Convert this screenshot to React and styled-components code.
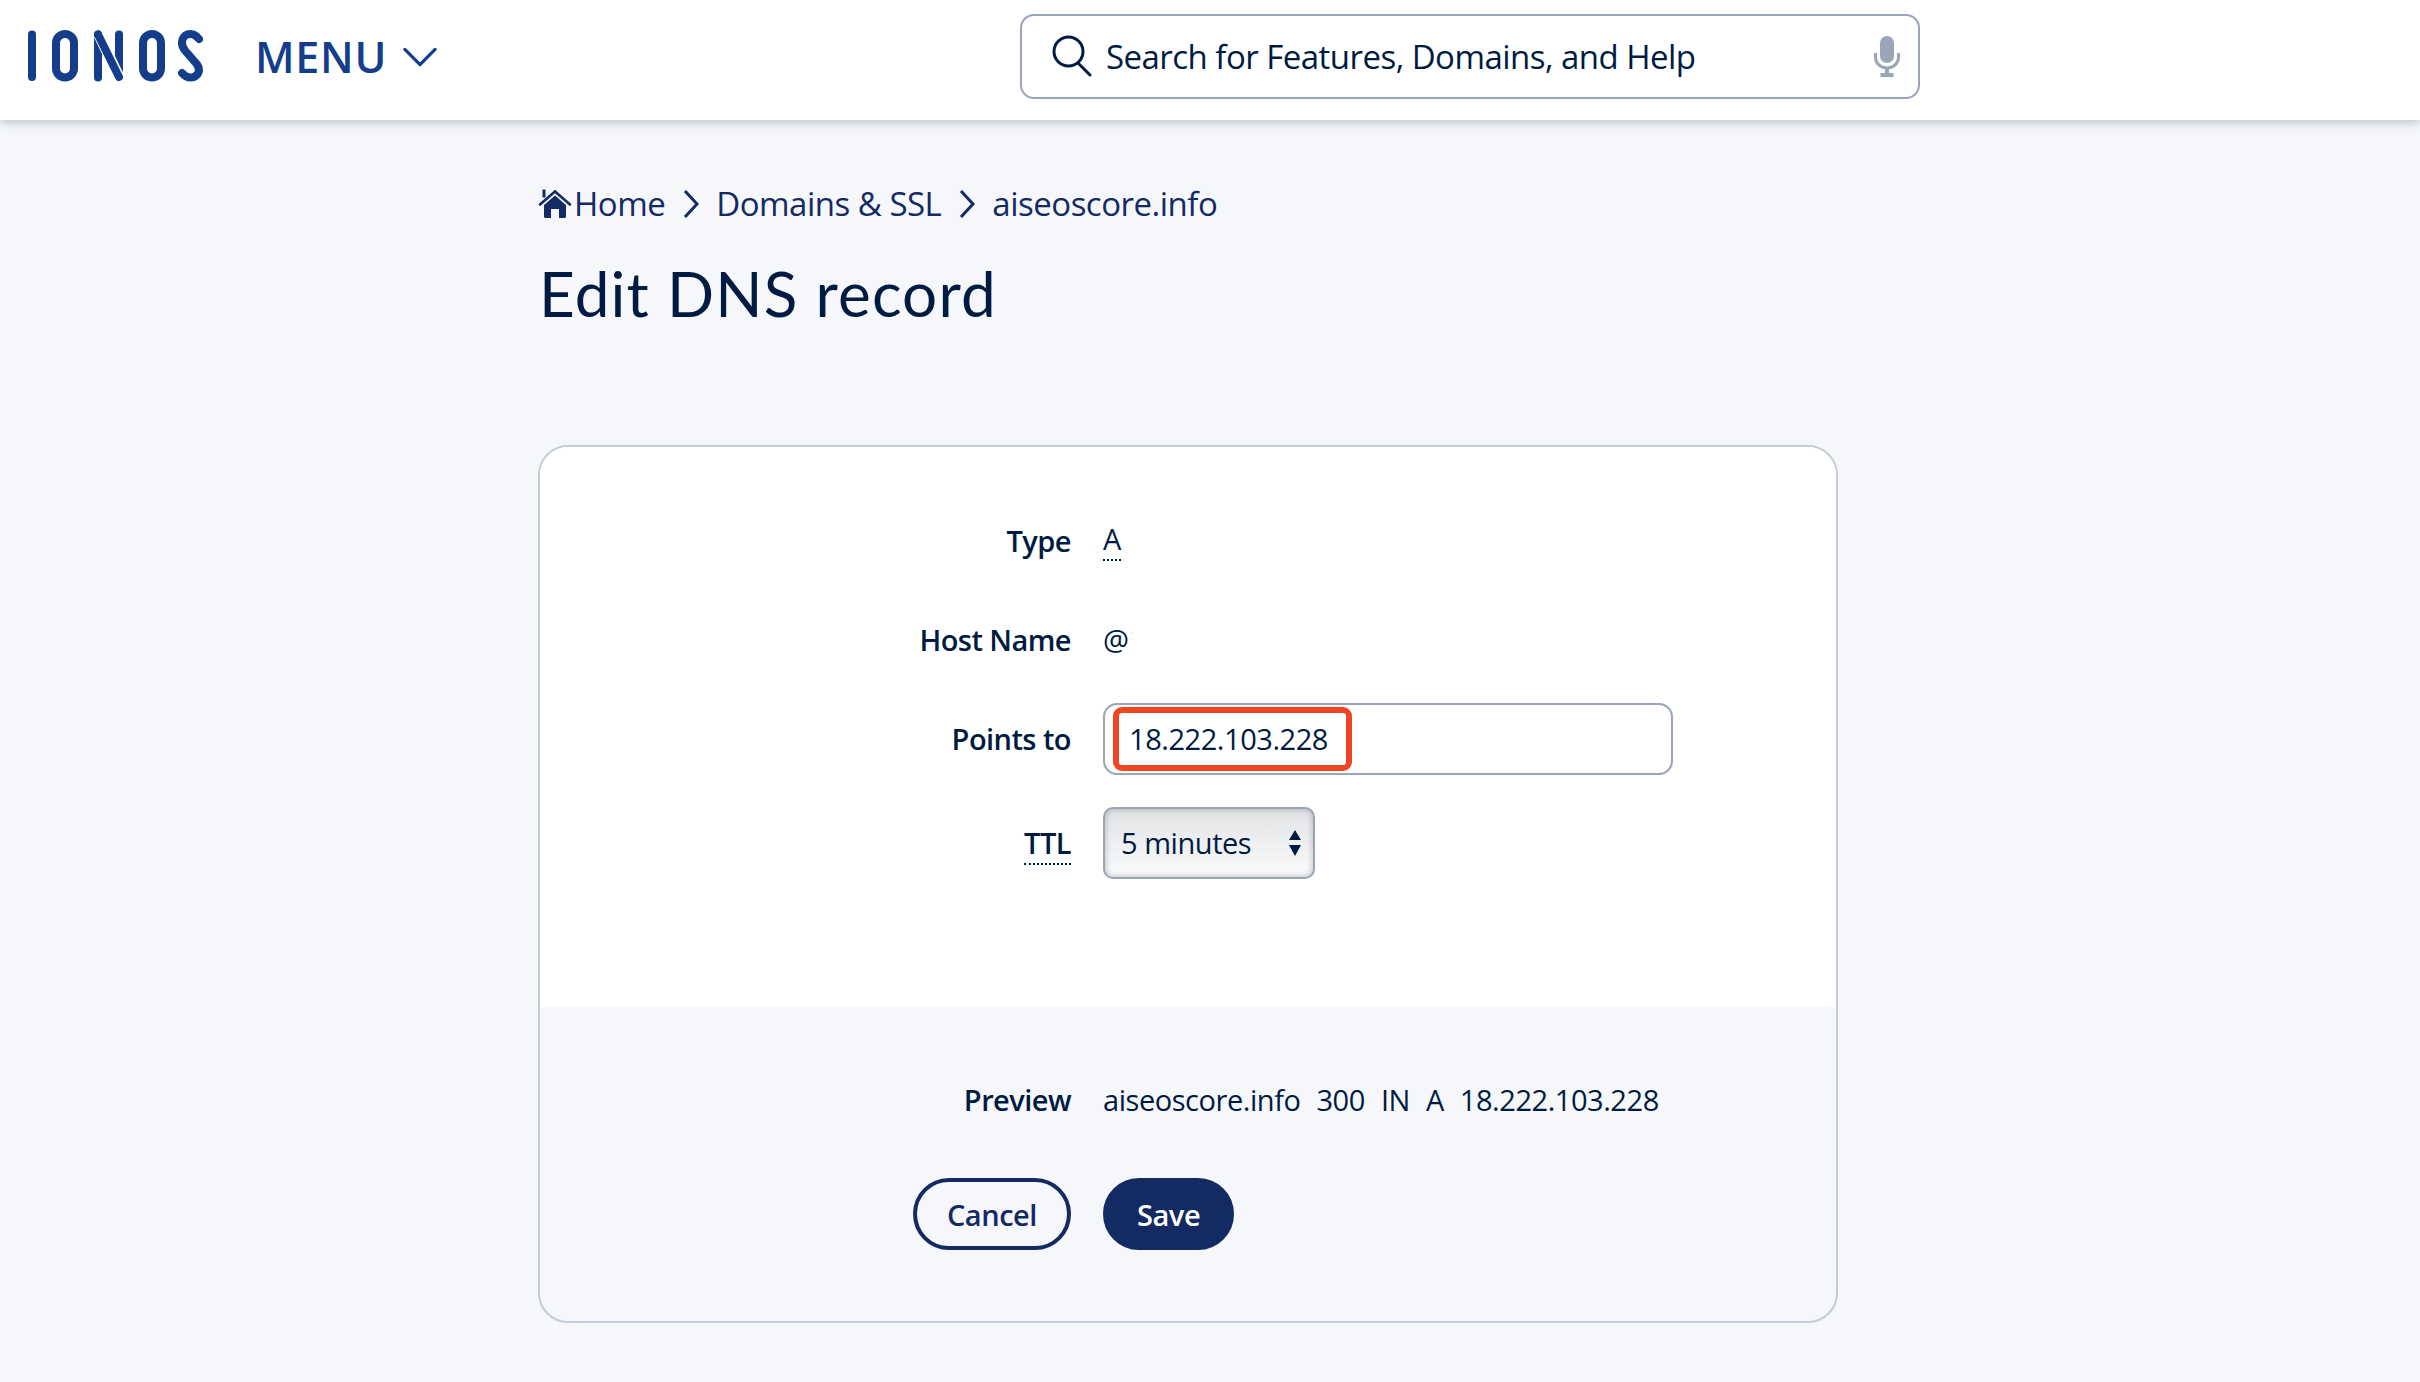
import React from 'react';
import styled, { createGlobalStyle } from 'styled-components';

const Global = createGlobalStyle`
  html, body { margin: 0; padding: 0; background: #f5f7fb; }
  body { font-family: "Open Sans", "Liberation Sans", sans-serif; color: #001b41; }
`;

const Logo = () => (
  <LogoSvg viewBox="0 0 176 52" fill="none" stroke="#143d8c" strokeWidth="8" strokeLinecap="round">
    <path d="M5 4.5V47" />
    <rect x="29" y="4" width="18" height="43.5" rx="9" />
    <path d="M71 4.5V47.5M92 4.5V40" />
    <path d="M72 5L92 47" stroke="#fff" strokeWidth="11" strokeLinecap="butt" />
    <path d="M71 4.5L92 47" />
    <rect x="116" y="4" width="18" height="43.5" rx="9" />
    <path d="M172 9C169 5.5 166 4 163.5 4C158 4 155 8 155 13C155 16 156 18 158 20.5L168 32C171 35 172 37 172 40C172 44 168 47.5 164 47.5C160 47.5 157 45.5 155 43" />
  </LogoSvg>
);

const SearchIcon = () => (
  <IconSearch viewBox="0 0 42 42" fill="none" stroke="#001b41" strokeWidth="3" strokeLinecap="round">
    <circle cx="16.5" cy="16.5" r="14.5" />
    <path d="M26 28L38 40" />
  </IconSearch>
);

const MicIcon = () => (
  <IconMic viewBox="0 0 26 41" fill="#9aa5b8">
    <rect x="6" y="0" width="14" height="27" rx="7" />
    <path d="M1.5 17V21C1.5 27.5 6.5 32 13 32C19.5 32 24.5 27.5 24.5 21V17" fill="none" stroke="#9aa5b8" strokeWidth="3" />
    <rect x="11" y="31" width="4" height="7" />
    <rect x="6.5" y="37" width="13" height="4" />
  </IconMic>
);

const HomeIcon = () => (
  <IconHome viewBox="0 0 34 30" fill="#142a63">
    <path d="M17 3.5L32 16.5" fill="none" stroke="#142a63" strokeWidth="2.6" strokeLinecap="round" />
    <path d="M17 3.5L2 16.5" fill="none" stroke="#142a63" strokeWidth="2.6" strokeLinecap="round" />
    <rect x="4.5" y="1.5" width="3" height="8" />
    <path d="M17 7.5L28 17V28.5C28 29.3 27.5 30 26.5 30H21V21H13V30H7.5C6.5 30 6 29.3 6 28.5V17Z" />
  </IconHome>
);

const Crumbs = () => (
  <Breadcrumb>
    <HomeIcon />
    <CrumbLink>Home</CrumbLink>
    <Chevron viewBox="0 0 16 28" fill="none" stroke="#142a63" strokeWidth="3">
      <path d="M2 1L14 14L2 27" />
    </Chevron>
    <CrumbLink>Domains &amp; SSL</CrumbLink>
    <Chevron viewBox="0 0 16 28" fill="none" stroke="#142a63" strokeWidth="3">
      <path d="M2 1L14 14L2 27" />
    </Chevron>
    <CrumbLink>aiseoscore.info</CrumbLink>
  </Breadcrumb>
);

const App = () => {
  return (
    <>
      <Global />
      <Header>
        <Logo />
        <Menu>
          MENU
          <MenuChevron viewBox="0 0 36 21" fill="none" stroke="#143d8c" strokeWidth="3.4" strokeLinecap="round" strokeLinejoin="round">
            <path d="M2 2L18 18L34 2" />
          </MenuChevron>
        </Menu>
        <SearchBox>
          <SearchIcon />
          <SearchText>Search for Features, Domains, and Help</SearchText>
          <MicIcon />
        </SearchBox>
      </Header>
      <Main>
        <Crumbs />
        <Title>Edit DNS record</Title>
        <Card>
          <FormPart>
            <Row>
              <Label>Type</Label>
              <Dotted>A</Dotted>
            </Row>
            <Row>
              <Label>Host Name</Label>
              <Value>@</Value>
            </Row>
            <Row>
              <Label>Points to</Label>
              <TextField>
                <span>18.222.103.228</span>
                <Highlight />
              </TextField>
            </Row>
            <Row spaced>
              <Label><DottedLabel>TTL</DottedLabel></Label>
              <Select>
                5 minutes
                <Arrows viewBox="0 0 14 26" fill="#001b41">
                  <path d="M7 0L13 10H1Z" />
                  <path d="M7 26L13 15H1Z" />
                </Arrows>
              </Select>
            </Row>
          </FormPart>
          <PreviewPart>
            <Row>
              <Label>Preview</Label>
              <PreviewValue>
                <span>aiseoscore.info</span>
                <span>300</span>
                <span>IN</span>
                <span>A</span>
                <span>18.222.103.228</span>
              </PreviewValue>
            </Row>
            <Buttons>
              <ButtonCell>
                <Button>Cancel</Button>
              </ButtonCell>
              <Button primary>Save</Button>
            </Buttons>
          </PreviewPart>
        </Card>
      </Main>
    </>
  );
};

export default App;

const Header = styled.header`
  height: 120px;
  box-sizing: border-box;
  background: #fff;
  box-shadow: 0 2px 10px rgba(60, 75, 105, 0.35);
  display: flex;
  align-items: center;
  padding: 0 0 8px 27px;
  position: relative;
`;
const LogoSvg = styled.svg`
  width: 176px;
  height: 52px;
  flex: none;
`;
const Menu = styled.div`
  margin-left: 52px;
  width: 182px;
  flex: none;
  display: flex;
  align-items: center;
  gap: 16px;
  font-size: 43px;
  font-weight: 600;
  color: #143d8c;
  letter-spacing: 0.7px;
`;
const MenuChevron = styled.svg`
  width: 36px;
  height: 21px;
  margin-top: 3px;
`;
const SearchBox = styled.div`
  margin-left: 583px;
  width: 900px;
  height: 85px;
  box-sizing: border-box;
  border: 2px solid #9aa5b8;
  border-radius: 14px;
  display: flex;
  align-items: center;
  padding: 0 18px 0 30px;
`;
const IconSearch = styled.svg`
  width: 42px;
  height: 42px;
  flex: none;
`;
const SearchText = styled.span`
  flex: 1;
  margin-left: 12px;
  font-size: 33px;
  letter-spacing: -0.53px;
  color: #001b41;
`;
const IconMic = styled.svg`
  width: 26px;
  height: 41px;
  flex: none;
`;
const Main = styled.main`
  width: 1300px;
  margin-left: 538px;
  padding-top: 58px;
  padding-bottom: 58px;
`;
const Breadcrumb = styled.nav`
  display: flex;
  align-items: center;
  height: 50px;
  font-size: 33px;
  letter-spacing: -0.5px;
  color: #142a63;
`;
const CrumbLink = styled.span`
  white-space: nowrap;
`;
const IconHome = styled.svg`
  width: 34px;
  height: 30px;
  flex: none;
  margin-right: 2px;
`;
const Chevron = styled.svg`
  width: 16px;
  height: 28px;
  flex: none;
  margin: 2px 17px 0 18px;
`;
const Title = styled.h1`
  margin: 25px 0 0 1px;
  height: 192px;
  font-family: Lato, "Open Sans", sans-serif;
  font-size: 62px;
  line-height: 80px;
  font-weight: 400;
  letter-spacing: 1.15px;
  color: #001b41;
`;
const Card = styled.section`
  border: 2px solid #c3ccd6;
  border-radius: 30px;
  overflow: hidden;
  box-sizing: border-box;
  height: 878px;
  display: flex;
  flex-direction: column;
`;
const FormPart = styled.div`
  height: 560px;
  flex: none;
  background: #fff;
  padding-top: 57px;
  box-sizing: border-box;
  display: flex;
  flex-direction: column;
  gap: 26px;
`;
const PreviewPart = styled.div`
  flex: 1;
  padding-top: 56px;
  display: flex;
  flex-direction: column;
`;
const Row = styled.div`
  display: grid;
  grid-template-columns: 531px 1fr;
  column-gap: 32px;
  align-items: center;
  min-height: 73px;
  font-size: 29px;
  letter-spacing: -0.45px;
  margin-top: ${(p) => (p.spaced ? '5px' : '0')};
`;
const Label = styled.div`
  text-align: right;
  font-weight: 600;
  letter-spacing: -0.55px;
  color: #001b41;
`;
const Value = styled.div`
  color: #001b41;
`;
const Dotted = styled.div`
  justify-self: start;
  border-bottom: 2px dotted #001b41;
  line-height: 36px;
  padding-bottom: 2px;
`;
const DottedLabel = styled.span`
  border-bottom: 2px dotted #001b41;
  padding-bottom: 1px;
`;
const TextField = styled.div`
  position: relative;
  width: 570px;
  height: 72px;
  box-sizing: border-box;
  border: 2px solid #9aa5b8;
  border-radius: 14px;
  background: #fff;
  display: flex;
  align-items: center;
  padding-left: 24px;
`;
const Highlight = styled.div`
  position: absolute;
  left: 8px;
  top: 2px;
  width: 239px;
  height: 64px;
  box-sizing: border-box;
  border: 6px solid #ee4525;
  border-radius: 9px;
`;
const Select = styled.div`
  width: 212px;
  height: 72px;
  box-sizing: border-box;
  border: 2px solid #9aa5b8;
  border-radius: 10px;
  background: linear-gradient(#e2e3e5, #fafbfc);
  box-shadow: inset 0 0 6px rgba(80, 85, 95, 0.4);
  display: flex;
  align-items: center;
  justify-content: space-between;
  padding: 0 11px 0 16px;
`;
const Arrows = styled.svg`
  width: 14px;
  height: 26px;
`;
const PreviewValue = styled.div`
  display: flex;
  gap: 16px;
`;
const Buttons = styled.div`
  display: grid;
  grid-template-columns: 531px auto;
  column-gap: 32px;
  justify-content: start;
  margin-top: 42px;
`;
const ButtonCell = styled.div`
  display: flex;
  justify-content: flex-end;
`;
const Button = styled.button`
  height: 72px;
  box-sizing: border-box;
  padding: 0 30px;
  border-radius: 37px;
  border: 4px solid #142a63;
  background: ${(p) => (p.primary ? '#142a63' : 'transparent')};
  color: ${(p) => (p.primary ? '#fff' : '#142a63')};
  font-family: "Open Sans", sans-serif;
  font-size: 29px;
  letter-spacing: -0.45px;
  font-weight: 600;
`;
